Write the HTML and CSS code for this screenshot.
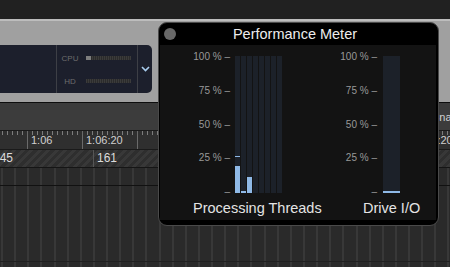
FILE: index.html
```html
<!DOCTYPE html>
<html lang="en">
<head>
  <meta http-equiv="content-type" content="text/html; charset=utf-8" />
  <title>Performance Meter</title>
  <link rel="stylesheet" href="styles.css">
</head>
<body>

  <div id="titlebar"></div>

  <div id="toolbar">
    <div id="lcd">
      <div class="lcd-main"></div>
      <div class="lcd-meters">
        <div class="meter-row">
          <span class="meter-label">CPU</span>
          <span class="meter cpu"></span>
        </div>
        <div class="meter-row">
          <span class="meter-label">HD</span>
          <span class="meter"></span>
        </div>
      </div>
      <div class="lcd-menu">
        <svg width="9" height="6" viewBox="0 0 9 6">
          <polyline points="1,1 4.5,4.5 8,1" fill="none" stroke="#a9cdef" stroke-width="1.6" />
        </svg>
      </div>
    </div>
  </div>

  <div id="snapbar"><span>Snap</span></div>

  <div id="ruler">
    <span class="major">1:06</span>
    <span class="major">1:06:20</span>
    <span class="major"></span>
    <span class="major">1:07</span>
    <span class="major">1:07:20</span>
    <span class="major">1:07:40</span>
    <span class="major">1:08</span>
    <span class="major">1:08:20</span>
  </div>

  <div id="bars">
    <span class="bar-cell">145</span>
    <span class="bar-cell">161</span>
  </div>

  <div id="lanes">
    <div class="track"></div>
    <div class="lane"></div>
  </div>

  <!-- floating window -->
  <div id="perf-meter">
    <div class="perf-title">
      <span class="close-btn"></span>
      <span class="perf-name">Performance Meter</span>
    </div>
    <div class="perf-body">
      <div class="group threads">
        <div class="chart">
          <div class="scale">
            <span>100 % &ndash;</span>
            <span>75 % &ndash;</span>
            <span>50 % &ndash;</span>
            <span>25 % &ndash;</span>
            <span>&ndash;</span>
          </div>
          <div class="columns">
            <div class="column"><span class="peak" style="bottom: 36px"></span><span class="fill" style="height: 27px"></span></div>
            <div class="column"><span class="fill" style="height: 2px"></span></div>
            <div class="column"><span class="fill" style="height: 16px"></span></div>
            <div class="column"></div>
            <div class="column"></div>
            <div class="column"></div>
            <div class="column"></div>
            <div class="column"></div>
          </div>
        </div>
        <div class="caption">Processing Threads</div>
      </div>
      <div class="group drive">
        <div class="chart">
          <div class="scale">
            <span>100 % &ndash;</span>
            <span>75 % &ndash;</span>
            <span>50 % &ndash;</span>
            <span>25 % &ndash;</span>
            <span>&ndash;</span>
          </div>
          <div class="columns">
            <div class="column wide"><span class="fill" style="height: 2px"></span></div>
          </div>
        </div>
        <div class="caption">Drive I/O</div>
      </div>
    </div>
  </div>

</body>
</html>
```

FILE: styles.css
```css
html, body {
  margin: 0;
  width: 100%;
  height: 100%;
}
body {
  position: relative;
  width: 450px;
  height: 267px;
  overflow: hidden;
  background: #2a2a2a;
  font-family: "Liberation Sans", Arial, sans-serif;
}

/* top of the main window */
#titlebar {
  height: 19px;
  background: #212121;
}
#toolbar {
  border-top: 2px solid #bdbdbd;
  border-bottom: 1px solid #0e0e0e;
  background: #a0a0a0;
  padding: 24px 0 9px;
}
#lcd {
  display: flex;
  width: 152px;
  height: 48px;
  background: #1c1f2c;
  border-radius: 0 5px 5px 0;
}
.lcd-main {
  width: 56px;
  border-right: 1px solid #3d3f46;
}
.lcd-meters {
  width: 81px;
  border-right: 1px solid #3d3f46;
  padding: 7px 0 0 4px;
  box-sizing: border-box;
  display: flex;
  flex-direction: column;
  gap: 11px;
}
.meter-row {
  display: flex;
  align-items: center;
  height: 12px;
  gap: 7px;
}
.meter-label {
  width: 18px;
  text-align: center;
  font-size: 8px;
  color: #6c6c6c;
}
.meter {
  width: 45px;
  height: 4px;
  background: repeating-linear-gradient(90deg, #3b3b3b 0 1px, #2b2b2b 1px 2px);
}
.meter.cpu {
  background: linear-gradient(90deg, #7e7e7e 0 5px, transparent 5px),
              repeating-linear-gradient(90deg, #3b3b3b 0 1px, #2b2b2b 1px 2px);
}
.lcd-menu {
  flex: 1;
  display: flex;
  align-items: center;
  justify-content: center;
}
.lcd-menu svg {
  display: block;
}

/* arrange area */
#snapbar {
  display: flex;
  align-items: center;
  height: 27px;
  background: #3c3c3c;
}
#snapbar span {
  margin-left: 432px;
  font-size: 11px;
  color: #d2d2d2;
}
#ruler {
  display: flex;
  height: 18px;
  padding-left: 27px;
  border-top: 1px solid #1a1a1a;
  background-color: #2f2f2f;
  background-image: repeating-linear-gradient(90deg, transparent 0 2px, #7c7c7c 2px 3px, transparent 3px 5px);
  background-size: 100% 4px;
  background-repeat: no-repeat;
}
#ruler .major {
  flex: none;
  width: 55px;
  box-sizing: border-box;
  border-left: 1px solid #6a6a6a;
  padding-left: 3px;
  font-size: 11px;
  line-height: 18px;
  color: #cfcfcf;
  white-space: nowrap;
}
#bars {
  display: flex;
  height: 17px;
  border-top: 1px solid #1a1a1a;
  background: repeating-linear-gradient(135deg, #2e2e2e 0 3px, #383838 3px 6px);
}
.bar-cell {
  flex: none;
  width: 104px;
  box-sizing: border-box;
  border-left: 1px solid #555;
  padding-left: 3px;
  font-size: 12px;
  line-height: 17px;
  color: #dcdcdc;
}
.bar-cell:first-child {
  margin-left: -11px;
}
#lanes {
  height: 99px;
  border-top: 1px solid #151515;
  background-color: #2a2a2a;
  background-image: repeating-linear-gradient(90deg, #464646 0 1px, transparent 1px 13.13px);
  background-position: 1.5px 0;
}
#lanes .track {
  height: 17px;
  border-bottom: 1px solid #111;
}
#lanes .lane {
  height: 75px;
  border-bottom: 1px solid #202020;
}

/* performance meter window */
#perf-meter {
  position: absolute;
  left: 158px;
  top: 22px;
  width: 281px;
  height: 204px;
  box-sizing: border-box;
  padding: 0 2px 5px 1px;
  border: 1px solid #4a4a4a;
  border-radius: 9px;
  background: #000;
}
.perf-title {
  display: grid;
  grid-template-columns: 1fr auto 1fr;
  align-items: center;
  height: 22px;
  padding-right: 6px;
}
.close-btn {
  width: 12px;
  height: 12px;
  margin-left: 4px;
  border-radius: 50%;
  background: #686868;
}
.perf-name {
  font-size: 14.5px;
  color: #ececec;
}
.perf-body {
  display: flex;
  height: 175px;
  box-sizing: border-box;
  padding: 6px 0 3px 33px;
  background: #131313;
}
.group {
  display: flex;
  flex-direction: column;
}
.group.threads {
  width: 147px;
}
.chart {
  display: flex;
  align-items: flex-start;
}
.scale {
  display: flex;
  flex-direction: column;
  justify-content: space-between;
  width: 37px;
  height: 147px;
  text-align: right;
  font-size: 10px;
  line-height: 12px;
  color: #999;
  white-space: nowrap;
}
.columns {
  display: flex;
  gap: 1px;
  margin: 5px 0 0 5px;
}
.drive .columns {
  margin-left: 6px;
}
.column {
  position: relative;
  display: flex;
  flex-direction: column;
  justify-content: flex-end;
  width: 5px;
  height: 137px;
  background: #1c2129;
}
.column.wide {
  width: 17px;
}
.fill {
  display: block;
  background: #8fb9e6;
}
.peak {
  position: absolute;
  left: 0;
  right: 0;
  height: 1px;
  background: #8fb9e6;
}
.caption {
  margin-top: 2px;
  font-size: 14.5px;
  line-height: 17px;
  color: #e4e4e4;
  white-space: nowrap;
}
.drive .caption {
  margin-left: 23px;
}
```
